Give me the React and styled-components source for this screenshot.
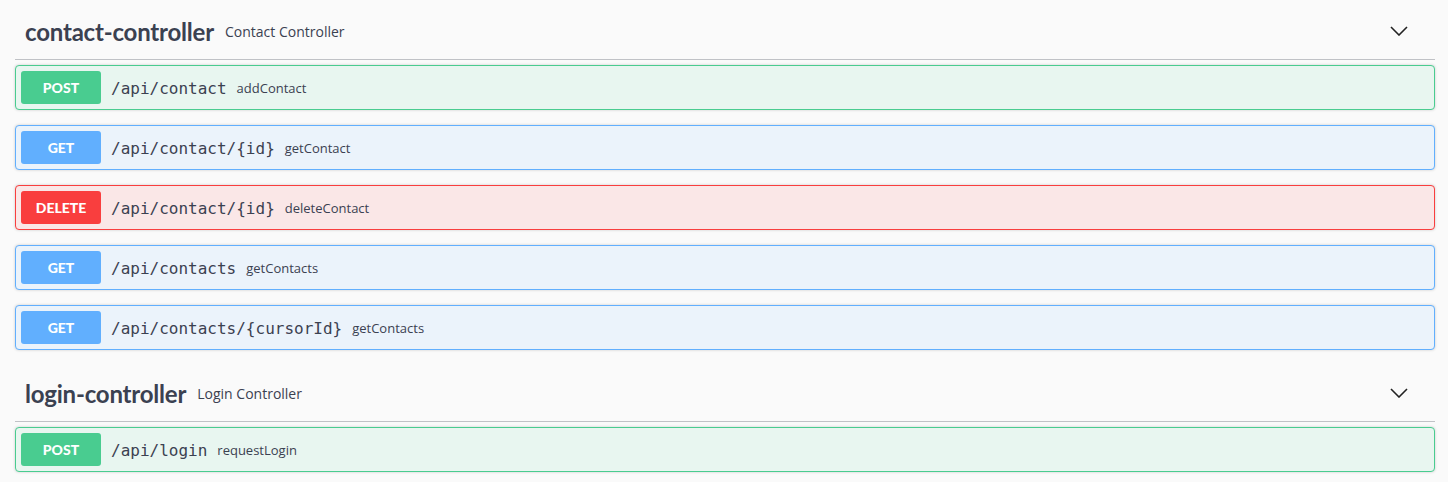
import React from "react";
import styled, { createGlobalStyle } from "styled-components";

const GlobalStyle = createGlobalStyle`
  html, body { margin: 0; padding: 0; background: #fafafa; }
  body { font-family: "Open Sans", sans-serif; color: #3b4151; }
`;

const Page = styled.div`
  padding: 3px 13px 0 15px;
  background: #fafafa;
`;

const Section = styled.section`
  margin-bottom: 15px;
`;

const TagHeader = styled.div`
  display: flex;
  align-items: center;
  height: 36px;
  padding: 10px 27px 10px 10px;
  margin-bottom: 5px;
  border-bottom: 1px solid rgba(59, 65, 81, 0.3);
`;

const TagName = styled.span`
  font-family: "Lato", sans-serif;
  font-weight: 700;
  font-size: 24px;
  color: #3b4151;
  letter-spacing: -0.2px;
`;

const TagDesc = styled.small`
  flex: 1;
  padding-left: 11px;
  font-family: "Open Sans", sans-serif;
  font-size: 14px;
  color: #3b4151;
`;

const Chevron = styled.svg`
  width: 18px;
  height: 10px;
  display: block;
`;

const OpBlock = styled.div`
  display: flex;
  align-items: center;
  padding: 5px;
  margin-bottom: 15px;
  border: 1px solid ${(p) => p.$color};
  border-radius: 4px;
  background: ${(p) => p.$bg};
  box-shadow: 0 0 3px rgba(0, 0, 0, 0.19);
  &:last-child { margin-bottom: 0; }
`;

const Method = styled.span`
  box-sizing: border-box;
  width: 80px;
  height: 33px;
  display: flex;
  align-items: center;
  justify-content: center;
  border-radius: 3px;
  background: ${(p) => p.$color};
  color: #fff;
  font-family: "Lato", sans-serif;
  font-weight: 900;
  font-size: 14px;
`;

const Path = styled.span`
  padding: 2px 10px 0;
  font-family: "DejaVu Sans Mono", monospace;
  font-size: 16px;
  color: #3b4151;
`;

const Summary = styled.span`
  padding-top: 1px;
  font-family: "Open Sans", sans-serif;
  font-size: 13px;
  color: #3b4151;
`;

const METHODS = {
  POST: { color: "#49cc90", bg: "#e8f6f0" },
  GET: { color: "#61affe", bg: "#ebf3fb" },
  DELETE: { color: "#f93e3e", bg: "#fae7e7" },
};

const sections = [
  {
    name: "contact-controller",
    desc: "Contact Controller",
    ops: [
      ["POST", "/api/contact", "addContact"],
      ["GET", "/api/contact/{id}", "getContact"],
      ["DELETE", "/api/contact/{id}", "deleteContact"],
      ["GET", "/api/contacts", "getContacts"],
      ["GET", "/api/contacts/{cursorId}", "getContacts"],
    ],
  },
  {
    name: "login-controller",
    desc: "Login Controller",
    ops: [["POST", "/api/login", "requestLogin"]],
  },
];

export default function App() {
  return (
    <>
      <GlobalStyle />
      <Page>
        {sections.map((s) => (
          <Section key={s.name}>
            <TagHeader>
              <TagName>{s.name}</TagName>
              <TagDesc>{s.desc}</TagDesc>
              <Chevron viewBox="0 0 18 10">
                <polyline
                  points="1,1 9,9 17,1"
                  fill="none"
                  stroke="#222"
                  strokeWidth="1.6"
                />
              </Chevron>
            </TagHeader>
            {s.ops.map(([m, path, sum], i) => (
              <OpBlock key={i} $color={METHODS[m].color} $bg={METHODS[m].bg}>
                <Method $color={METHODS[m].color}>{m}</Method>
                <Path>{path}</Path>
                <Summary>{sum}</Summary>
              </OpBlock>
            ))}
          </Section>
        ))}
      </Page>
    </>
  );
}
